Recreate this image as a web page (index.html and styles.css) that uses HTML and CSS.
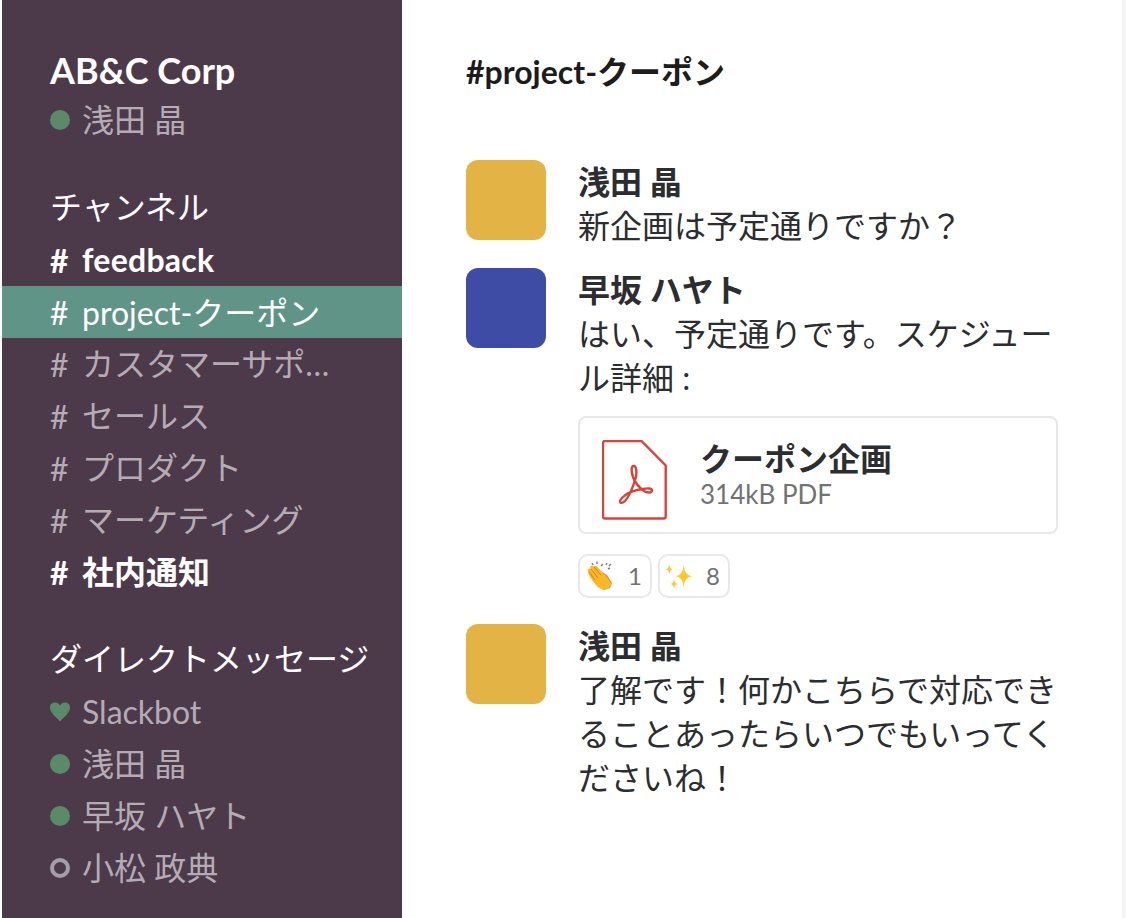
FILE: index.html
```html
<!DOCTYPE html>
<html>
<head>
  <title>#project-クーポン</title>
  <link rel="stylesheet" href="styles.css">
</head>
<body>
  <div class="app">
    <div class="sidebar">
      <div class="team-name">AB&amp;C Corp</div>
      <div class="row row-me"><span class="mark"><span class="dot"></span></span><span class="label ja">浅田 晶</span></div>

      <div class="section-title">チャンネル</div>
      <div class="row unread"><span class="mark">#</span><span class="label wide">feedback</span></div>
      <div class="row active"><span class="mark">#</span><span class="label">project-クーポン</span></div>
      <div class="row"><span class="mark">#</span><span class="label ja">カスタマーサポ…</span></div>
      <div class="row"><span class="mark">#</span><span class="label ja">セールス</span></div>
      <div class="row"><span class="mark">#</span><span class="label ja">プロダクト</span></div>
      <div class="row"><span class="mark">#</span><span class="label ja">マーケティング</span></div>
      <div class="row unread"><span class="mark">#</span><span class="label ja">社内通知</span></div>

      <div class="section-title">ダイレクトメッセージ</div>
      <div class="row">
        <span class="mark">
          <svg class="heart" width="20" height="20" viewBox="0 0 20 20"><path d="M10 19.5C6 15 0 10.5 0 5.5 0 2.5 2.300 0.500 5 0.500 7 0.500 9 1.500 10 3.500 11 1.500 13 0.500 15 0.500 17.700 0.500 20 2.500 20 5.500 20 10.500 14 15 10 19.500Z"/></svg>
        </span>
        <span class="label">Slackbot</span>
      </div>
      <div class="row"><span class="mark"><span class="dot"></span></span><span class="label ja">浅田 晶</span></div>
      <div class="row"><span class="mark"><span class="dot"></span></span><span class="label ja">早坂 ハヤト</span></div>
      <div class="row"><span class="mark"><span class="ring"></span></span><span class="label ja">小松 政典</span></div>
    </div>

    <div class="main">
      <h1 class="channel-title">#project-クーポン</h1>

      <div class="message">
        <div class="avatar yellow"></div>
        <div class="body">
          <div class="author">浅田 晶</div>
          <div class="text">新企画は予定通りですか？</div>
        </div>
      </div>

      <div class="message">
        <div class="avatar blue"></div>
        <div class="body">
          <div class="author">早坂 ハヤト</div>
          <div class="text">はい、予定通りです。スケジュール詳細 :</div>

          <div class="file-card">
            <svg class="file-icon" width="66" height="80" viewBox="-1 -1 66 80">
              <path class="outline" d="M2 0H38.500L62.700 24.500V75.500a2 2 0 0 1-2 2H2a2 2 0 0 1-2-2V2a2 2 0 0 1 2-2Z"/>
              <path class="acrobat" d="M17 60C17 63 20 62 22 60 26 56 30 46 33 36 34 30 33 25 31 25 28 25 28 30 30 36 32 42 37 47 41 50 44 52 49 52 49 49.500 49 47 44 47 40 48 32 49 24 52 20 56 18 58 17 59 17 60Z"/>
            </svg>
            <div class="file-info">
              <div class="file-name">クーポン企画</div>
              <div class="file-meta">314kB PDF</div>
            </div>
          </div>

          <div class="reactions">
            <div class="reaction reaction-clap">
              <svg width="28" height="30" viewBox="0 0 28 30">
                <path class="clap-back" d="M7 8 11 6 16 11 21 14 26 22 24 27 18 29 12 26Z"/>
                <path class="clap-front" d="M2 10C1 8 3 7 5 8L4 6C5 4 7 5 8 6L8 5C10 4 11 5 13 8L19 14C22 18 25 21 25 24 24 27 20 29 16 28 12 27 9 23 6 19 4 16 2 13 2 10Z"/>
                <path class="clap-line" d="M8 6 15 14M5 8 12 17M3 11 9 19"/>
                <path class="clap-mark" d="M6 2 7 4M11 0.500V3M17 3 15 5M21 2 20 4M25 3 23 5M24 7 22 8"/>
              </svg>
              <span class="count">1</span>
            </div>
            <div class="reaction reaction-spark">
              <svg width="26" height="28" viewBox="0 0 26 28">
                <path class="spark" d="M17.700 3.300Q18.700 13.300 25.700 14.300 18.700 15.300 17.700 25.300 16.700 15.300 9.700 14.300 16.700 13.300 17.700 3.300Z"/>
                <path class="spark" d="M3.300 2.300Q3.900 6.700 6.800 7.300 3.900 7.900 3.300 12.300 2.700 7.900 0 7.300 2.700 6.700 3.300 2.300Z"/>
                <path class="spark" d="M8 17Q8.600 21.400 11.500 22 8.600 22.600 8 27 7.400 22.600 4.500 22 7.400 21.400 8 17Z"/>
              </svg>
              <span class="count">8</span>
            </div>
          </div>
        </div>
      </div>

      <div class="message">
        <div class="avatar yellow"></div>
        <div class="body">
          <div class="author">浅田 晶</div>
          <div class="text">了解です！何かこちらで対応できることあったらいつでもいってくださいね！</div>
        </div>
      </div>
    </div>

    <div class="edge"></div>
  </div>
</body>
</html>
```

FILE: styles.css
```css
html, body {
  margin: 0;
  padding: 0;
}

body {
  font-family: "Lato", "Noto Sans CJK JP", sans-serif;
  background-color: #fff;
  color: #2c2d30;
}

.app {
  display: flex;
  height: 918px;
  padding-left: 2px;
  box-sizing: border-box;
  overflow: hidden;
}

/* sidebar */
.sidebar {
  width: 400px;
  flex-shrink: 0;
  padding-top: 46px;
  box-sizing: border-box;
  background-color: #4c3a4b;
  color: #b5abb4;
}

.team-name {
  margin-bottom: 2px;
  padding-left: 48px;
  font-size: 36px;
  font-weight: 700;
  line-height: 48px;
  color: #fff;
}

.section-title {
  margin: 36px 0 2px;
  padding-left: 48px;
  font-size: 32px;
  line-height: 50px;
  color: #fff;
}

.row {
  display: flex;
  align-items: center;
  height: 52px;
  padding: 0 48px;
  box-sizing: border-box;
  font-size: 32px;
}

.row-me {
  height: 50px;
  padding-bottom: 2px;
}

.mark {
  display: flex;
  align-items: center;
  width: 32px;
  flex-shrink: 0;
}

.label {
  padding-bottom: 2px;
  white-space: nowrap;
}

/* Japanese glyphs sit low in the line box */
.ja {
  padding-bottom: 5px;
}

.wide {
  letter-spacing: 0.25px;
}

.unread {
  color: #fff;
  font-weight: 700;
}

.active {
  background-color: #5f9487;
  color: #fff;
}

.dot {
  width: 20px;
  height: 20px;
  border-radius: 50%;
  background-color: #5a8a68;
}

.ring {
  width: 20px;
  height: 20px;
  border: 4px solid #a59dac;
  border-radius: 50%;
  box-sizing: border-box;
}

.heart {
  fill: #5a8a68;
}

/* main column */
.main {
  flex: 1;
  padding: 50px 0 0 64px;
}

.channel-title {
  margin: 0 0 66px;
  font-size: 32px;
  font-weight: 700;
  line-height: 44px;
  color: #1d1c1d;
}

.message {
  display: flex;
  gap: 32px;
  width: 592px;
  margin-bottom: 20px;
}

.avatar {
  width: 80px;
  height: 80px;
  flex-shrink: 0;
  border-radius: 12px;
}

.yellow {
  background-color: #e3b445;
}

.blue {
  background-color: #3f4ca6;
}

.body {
  flex: 1;
  min-width: 0;
  font-size: 32px;
  line-height: 44px;
}

.author {
  font-weight: 700;
}

.file-card {
  display: flex;
  align-items: center;
  gap: 32px;
  height: 118px;
  margin-top: 16px;
  padding-left: 22px;
  border: 2px solid #e8e8e8;
  border-radius: 8px;
  box-sizing: border-box;
}

.file-icon {
  flex-shrink: 0;
  margin-top: 9px;
}

.outline,
.acrobat {
  fill: none;
  stroke: #dc4338;
  stroke-width: 2.4;
}

.file-info {
  padding-bottom: 4px;
}

.file-name {
  font-size: 32px;
  font-weight: 700;
  line-height: 42px;
}

.file-meta {
  font-size: 26px;
  line-height: 28px;
  color: #717274;
}

.reactions {
  display: flex;
  gap: 6px;
  margin-top: 20px;
  margin-bottom: 6px;
}

.reaction {
  display: flex;
  align-items: center;
  justify-content: space-between;
  height: 44px;
  padding: 0 8px 0 6px;
  border: 2px solid #e8e8e8;
  border-radius: 10px;
  box-sizing: border-box;
}

.reaction-clap {
  width: 74px;
}

.reaction-spark {
  width: 72px;
}

.count {
  font-size: 24px;
  color: #717274;
}

.clap-back {
  fill: #e8920c;
}

.clap-front {
  fill: #fbb72c;
}

.clap-line {
  fill: none;
  stroke: #d98409;
  stroke-width: 1;
}

.clap-mark {
  fill: none;
  stroke: #7d7d7d;
  stroke-width: 1.4;
}

.spark {
  fill: #fdc92f;
}

.edge {
  width: 4px;
  flex-shrink: 0;
  background-color: #f4f4f4;
}
```
